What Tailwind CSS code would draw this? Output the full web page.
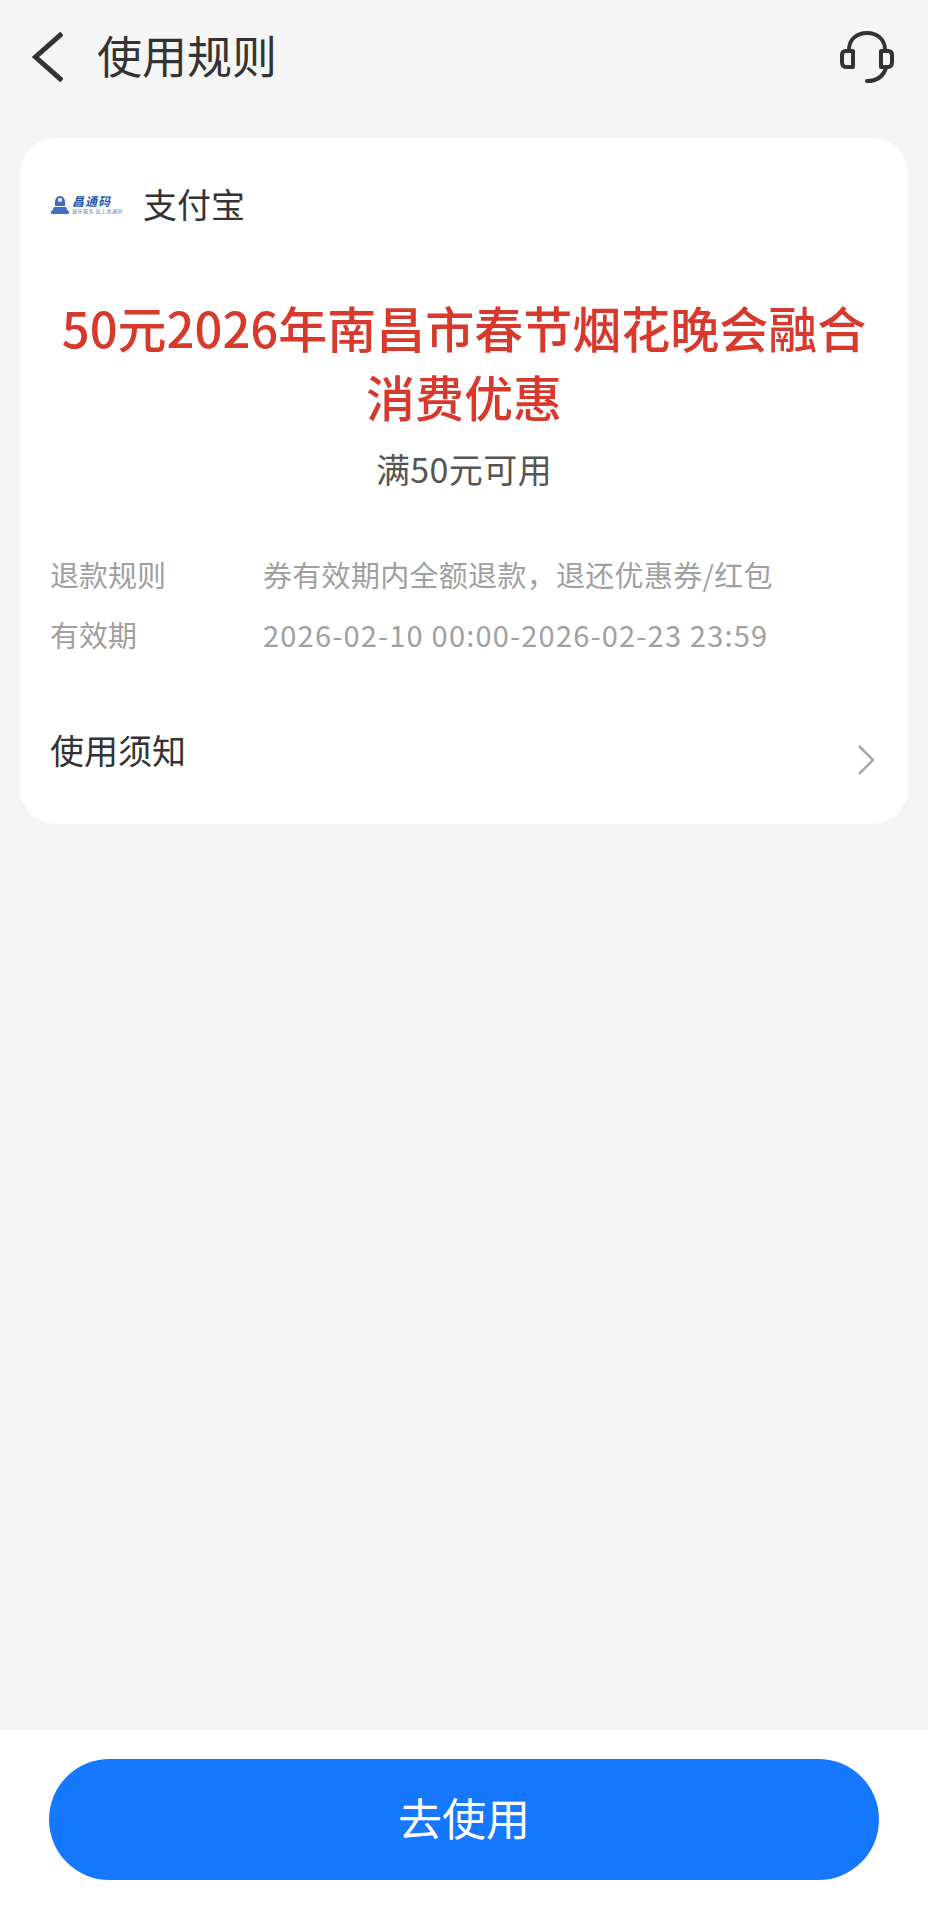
<!DOCTYPE html>
<html lang="zh-CN">
<head>
    <meta charset="UTF-8">
    <meta name="viewport" content="width=device-width, initial-scale=1.0">
    <title>使用规则</title>
    <script src="https://cdn.jsdelivr.net/npm/@tailwindcss/browser@4"></script>
</head>
<body class="bg-[#f5f5f5] font-['Noto_Sans_CJK_SC',sans-serif]">
    <div class="h-[1922px] flex flex-col">
        <!-- Header -->
        <div class="h-[114px] flex items-center pl-[32px] pr-[34px] shrink-0">
            <svg width="31" height="50" viewBox="0 0 31 50" fill="none" stroke="#333333" stroke-width="5">
                <path d="M30 1.5 L3.500 25 L30 48.500"/>
            </svg>
            <h1 class="ml-[34px] mb-[4px] text-[45px] leading-[56px] text-[#333333]">使用规则</h1>
            <svg class="ml-auto" width="54" height="52" viewBox="0 0 54 52" fill="none" stroke="#333333" stroke-width="4" stroke-linecap="round" stroke-linejoin="round">
                <path d="M9 19 C9 8 17 2 27 2 C37 2 45 8 45 19"/>
                <path d="M13 20 H6 C3 20 2 22 2 24 V31 C2 34 3 36 6 36 H13 Z"/>
                <path d="M41 20 H48 C51 20 52 22 52 24 V31 C52 34 51 36 48 36 H41 Z"/>
                <path d="M46 37 C43 46 36 50 27 50"/>
            </svg>
        </div>

        <!-- Card -->
        <div class="mx-[20px] mt-[24px] h-[686px] bg-white rounded-[36px] px-[30px] shrink-0">
            <div class="flex items-center pt-[44px] h-[88px]">
                <div class="w-[78px] flex items-center gap-[2px]">
                    <svg class="shrink-0" width="20" height="20" viewBox="0 0 20 20" fill="#3f6fc0">
                        <path d="M5 8 C5 0 15 0 15 8 V12 H5 Z"/>
                        <circle cx="10" cy="6" r="2" fill="#ffffff"/>
                        <path d="M4 13 H16 L18 17 H19 V20 H1 V17 H2 Z"/>
                    </svg>
                    <div class="flex flex-col gap-[1px]">
                        <span class="text-[12px] leading-[13px] font-bold italic tracking-[1px] text-[#1f57b0]">昌通码</span>
                        <span class="text-[5px] leading-[6px] tracking-[0.5px] whitespace-nowrap text-[#4a78bd]">城市服务 就上昌通码</span>
                    </div>
                </div>
                <span class="ml-[15px] text-[34px] leading-[44px] text-[#333333]">支付宝</span>
            </div>

            <div class="mt-[66px] text-center text-[49px] leading-[69px] font-medium text-[#d8392d]">
                50元2026年南昌市春节烟花晚会融合<br>消费优惠
            </div>
            <div class="mt-[17px] text-center text-[34px] leading-[44px] tracking-[0.4px] text-[#555555]">满50元可用</div>

            <div class="mt-[61px] flex flex-col gap-[16px] text-[29px] leading-[44px] text-[#a0a0a0]">
                <div class="flex">
                    <span class="w-[213px] shrink-0">退款规则</span>
                    <span class="tracking-[0.3px]">券有效期内全额退款，退还优惠券/红包</span>
                </div>
                <div class="flex">
                    <span class="w-[213px] shrink-0">有效期</span>
                    <span class="tracking-[1.2px]">2026-02-10 00:00-2026-02-23 23:59</span>
                </div>
            </div>

            <div class="mt-[69px] flex items-center justify-between">
                <span class="text-[34px] leading-[48px] text-[#333333]">使用须知</span>
                <svg class="mt-[20px] mr-[3px]" width="18" height="30" viewBox="0 0 18 30" fill="none" stroke="#a8a8a8" stroke-width="2.500">
                    <path d="M2 1 L16 15 L2 29"/>
                </svg>
            </div>
        </div>

        <!-- Bottom bar -->
        <div class="mt-auto h-[192px] bg-white px-[49px] pt-[29px] shrink-0">
            <button class="w-full h-[121px] rounded-full bg-[#1677ff] text-white text-[44px] pb-[6px]">去使用</button>
        </div>
    </div>
</body>
</html>
